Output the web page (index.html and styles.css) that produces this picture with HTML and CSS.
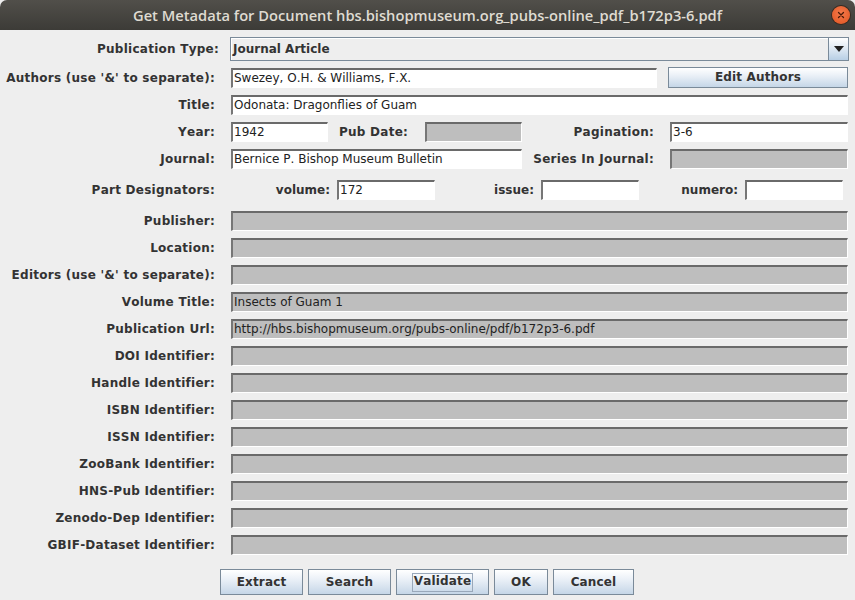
FILE: index.html
```html
<!DOCTYPE html>
<html>
<head>
<meta charset="utf-8">
<link rel="stylesheet" href="styles.css">
</head>
<body>
<div class="window">
  <div class="titlebar">
    <span class="title">Get Metadata for Document hbs.bishopmuseum.org_pubs-online_pdf_b172p3-6.pdf</span>
    <span class="close">
      <svg width="16" height="16" viewBox="0 0 16 16"><path d="M5.5 5.5 L10.5 10.5 M10.5 5.5 L5.5 10.5" stroke="#4a1a08" stroke-width="1.3" stroke-linecap="round"/></svg>
    </span>
  </div>
  <div class="content">
    <div class="row r-type">
      <label class="lbl l-type">Publication Type:</label>
      <div class="combo">
        <span class="combo-text">Journal Article</span>
        <span class="combo-btn"><svg width="10" height="6" viewBox="0 0 10 6"><path d="M0 0 H10 L5 6 Z" fill="#222"/></svg></span>
      </div>
    </div>
    <div class="row r-authors">
      <label class="lbl">Authors (use '&amp;' to separate):</label>
      <div class="field w-authors">Swezey, O.H. &amp; Williams, F.X.</div>
      <button class="btn btn-edit">Edit Authors</button>
    </div>
    <div class="row">
      <label class="lbl">Title:</label>
      <div class="field grow">Odonata: Dragonflies of Guam</div>
    </div>
    <div class="row">
      <label class="lbl">Year:</label>
      <div class="field w-year">1942</div>
      <label class="lbl2 l-pubdate">Pub Date:</label>
      <div class="field off w-pubdate"></div>
      <label class="lbl3">Pagination:</label>
      <div class="field grow">3-6</div>
    </div>
    <div class="row">
      <label class="lbl">Journal:</label>
      <div class="field w-journal">Bernice P. Bishop Museum Bulletin</div>
      <label class="lbl3">Series In Journal:</label>
      <div class="field off grow"></div>
    </div>
    <div class="row r-parts">
      <label class="lbl">Part Designators:</label>
      <div class="part">
        <label class="plbl">volume:</label>
        <div class="field pfield">172</div>
      </div>
      <div class="part">
        <label class="plbl">issue:</label>
        <div class="field pfield"></div>
      </div>
      <div class="part">
        <label class="plbl">numero:</label>
        <div class="field pfield"></div>
      </div>
    </div>
    <div class="row">
      <label class="lbl">Publisher:</label>
      <div class="field off grow"></div>
    </div>
    <div class="row">
      <label class="lbl">Location:</label>
      <div class="field off grow"></div>
    </div>
    <div class="row">
      <label class="lbl">Editors (use '&amp;' to separate):</label>
      <div class="field off grow"></div>
    </div>
    <div class="row">
      <label class="lbl">Volume Title:</label>
      <div class="field off grow">Insects of Guam 1</div>
    </div>
    <div class="row">
      <label class="lbl">Publication Url:</label>
      <div class="field off grow">http://hbs.bishopmuseum.org/pubs-online/pdf/b172p3-6.pdf</div>
    </div>
    <div class="row">
      <label class="lbl">DOI Identifier:</label>
      <div class="field off grow"></div>
    </div>
    <div class="row">
      <label class="lbl">Handle Identifier:</label>
      <div class="field off grow"></div>
    </div>
    <div class="row">
      <label class="lbl">ISBN Identifier:</label>
      <div class="field off grow"></div>
    </div>
    <div class="row">
      <label class="lbl">ISSN Identifier:</label>
      <div class="field off grow"></div>
    </div>
    <div class="row">
      <label class="lbl">ZooBank Identifier:</label>
      <div class="field off grow"></div>
    </div>
    <div class="row">
      <label class="lbl">HNS-Pub Identifier:</label>
      <div class="field off grow"></div>
    </div>
    <div class="row">
      <label class="lbl">Zenodo-Dep Identifier:</label>
      <div class="field off grow"></div>
    </div>
    <div class="row r-last">
      <label class="lbl">GBIF-Dataset Identifier:</label>
      <div class="field off grow"></div>
    </div>
    <div class="buttons">
      <button class="btn b-extract">Extract</button>
      <button class="btn b-search">Search</button>
      <button class="btn b-validate"><span class="focus">Validate</span></button>
      <button class="btn b-ok">OK</button>
      <button class="btn b-cancel">Cancel</button>
    </div>
  </div>
</div>
</body>
</html>
```
FILE: styles.css
```css
html, body {
  margin: 0;
  padding: 0;
  background: #eeeeee;
}
.window {
  width: 855px;
  height: 600px;
  background: #eeeeee;
  overflow: hidden;
  font-family: "DejaVu Sans", sans-serif;
  font-size: 12px;
  font-kerning: none;
  color: #333333;
}
.titlebar {
  height: 30px;
  border-radius: 7px 7px 0 0;
  background: linear-gradient(#514f4a, #3c3b37);
  display: flex;
  align-items: center;
  justify-content: center;
  position: relative;
}
.title {
  font-family: "Open Sans", sans-serif;
  font-weight: 600;
  font-size: 14.7px;
  font-kerning: normal;
  color: #dfdbd2;
}
.close {
  position: absolute;
  right: 5px;
  top: 6px;
  width: 18px;
  height: 18px;
  border-radius: 50%;
  background: radial-gradient(circle at 50% 40%, #f47a4c, #e0531f);
  box-shadow: 0 0 0 1px #3a2a20;
  display: flex;
  align-items: center;
  justify-content: center;
}
.content {
  padding: 7px 7px 0 0;
}
.row {
  display: flex;
  align-items: center;
  height: 20px;
  margin-bottom: 7px;
}
.r-type {
  height: 24px;
  margin-bottom: 6px;
}
.r-authors {
  height: 21px;
  align-items: flex-end;
}
.r-parts {
  margin-top: 11px;
  margin-bottom: 11px;
}
.r-last {
  margin-bottom: 14px;
}
.lbl {
  width: 215px;
  text-align: right;
  font-weight: bold;
  letter-spacing: 0.25px;
  margin-right: 16px;
  white-space: nowrap;
  flex: none;
  align-self: center;
}
.l-type {
  width: 219px;
  margin-right: 12px;
}
.field {
  height: 20px;
  box-sizing: border-box;
  background: #ffffff;
  border-style: solid;
  border-width: 2px 1px 1px 2px;
  border-color: #6a6a6a #ffffff #ffffff #767676;
  padding: 0 0 0 1px;
  line-height: 17px;
  color: #222222;
  white-space: nowrap;
  overflow: hidden;
  flex: none;
}
.field.off {
  background: #bebebe;
}
.grow {
  flex: 1;
}
.w-authors { width: 426px; }
.w-year { width: 97px; }
.w-pubdate { width: 97px; }
.w-journal { width: 291px; }
.lbl2 {
  font-weight: bold;
  letter-spacing: 0.25px;
  white-space: nowrap;
  flex: none;
}
.l-pubdate {
  width: 86px;
  margin-left: 11px;
}
.lbl3 {
  font-weight: bold;
  letter-spacing: 0.25px;
  white-space: nowrap;
  text-align: right;
  width: 121px;
  margin-left: 11px;
  margin-right: 16px;
  flex: none;
}
.combo {
  flex: 1;
  height: 24px;
  box-sizing: border-box;
  border: 1px solid #7a8a99;
  background: #eeeeee;
  display: flex;
  align-items: center;
  box-shadow: inset 1px 1px 0 #ffffff;
  margin-left: -1px;
  margin-right: -1px;
}
.combo-text {
  flex: 1;
  font-weight: bold;
  padding-left: 2px;
}
.combo-btn {
  width: 19px;
  height: 22px;
  border-left: 1px solid #7a8a99;
  background: linear-gradient(#ffffff, #dde8f3 50%, #b8cfe5);
  display: flex;
  align-items: center;
  justify-content: center;
}
.btn {
  font-family: "DejaVu Sans", sans-serif;
  font-size: 12px;
  font-weight: bold;
  font-kerning: none;
  letter-spacing: 0.15px;
  color: #333333;
  border: 1px solid #7a8a99;
  background: linear-gradient(#ffffff 0%, #eaf0f7 40%, #c5d6e7 100%);
  padding: 0;
  margin: 0;
  box-sizing: border-box;
}
.btn-edit {
  flex: 1;
  height: 21px;
  margin-left: 11px;
  line-height: 17px;
}
.part {
  display: flex;
  align-items: center;
  width: 204px;
  flex: none;
}
.plbl {
  width: 100px;
  text-align: right;
  font-weight: bold;
  margin-right: 7px;
}
.pfield {
  width: 98px;
}
.buttons {
  display: flex;
  gap: 5px;
  padding-left: 220px;
}
.buttons .btn {
  height: 26px;
}
.b-extract { width: 83px; }
.b-search { width: 83px; }
.b-validate { width: 93px; }
.b-ok { width: 54px; }
.b-cancel { width: 81px; }
.focus {
  display: inline-block;
  border: 1px solid #99a8ba;
  padding: 0 1px 2px;
  line-height: 15px;
}
```
